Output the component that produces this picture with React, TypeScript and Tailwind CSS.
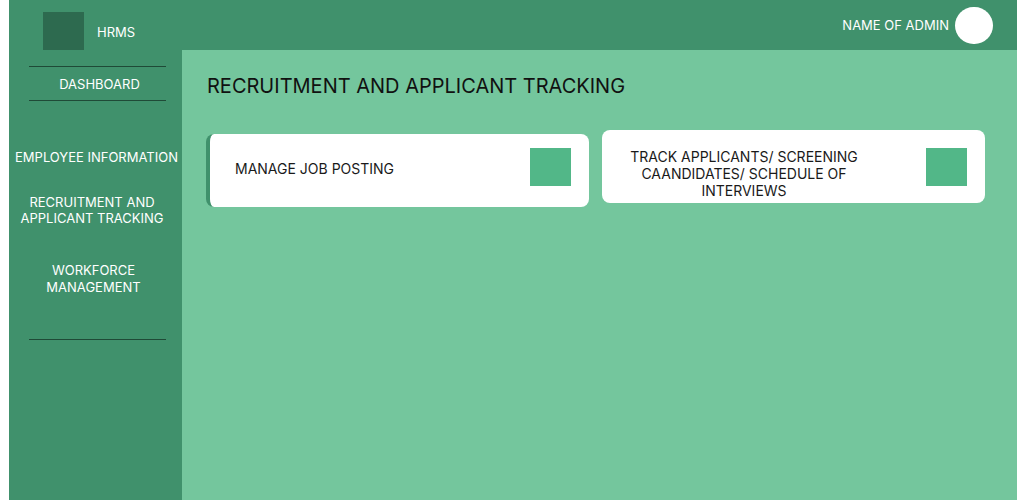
export default function App() {
  return (
    <div className="min-h-[500px] h-[500px] w-full bg-white pl-[9px] font-['Inter','Liberation_Sans',sans-serif] overflow-hidden">
      <div className="flex h-full flex-col">
        {/* Top bar */}
        <header className="flex h-[50px] items-stretch bg-[#40916c]">
          <div className="flex w-[173px] items-end">
            <div className="ml-[34px] h-[38px] w-[41px] bg-[#2d6a4f]" />
            <span className="mb-[8px] ml-[13px] text-[13px] text-white">HRMS</span>
          </div>
          <div className="ml-auto mr-[24px] flex items-center gap-[6px]">
            <span className="mt-[2px] text-[13px] text-white">NAME OF ADMIN</span>
            <div className="h-[37px] w-[38px] rounded-full bg-white" />
          </div>
        </header>

        <div className="flex flex-1">
          {/* Sidebar */}
          <aside className="flex w-[173px] flex-col items-center bg-[#40916c] text-[13px] leading-[16px] text-white">
            <div className="ml-[4px] mt-[16px] h-px w-[137px] bg-[#1f4a37]" />
            <div className="flex h-[33px] items-center pl-[8px]">DASHBOARD</div>
            <div className="ml-[4px] h-px w-[137px] bg-[#1f4a37]" />
            <div className="mt-[48px] pl-[2px] text-center">EMPLOYEE INFORMATION</div>
            <div className="mt-[29px] pr-[7px] text-center">
              RECRUITMENT AND
              <br />
              APPLICANT TRACKING
            </div>
            <div className="mt-[36px] pr-[4px] text-center leading-[17px]">
              WORKFORCE
              <br />
              MANAGEMENT
            </div>
            <div className="ml-[4px] mt-[43px] h-px w-[137px] bg-[#1f4a37]" />
          </aside>

          {/* Main */}
          <main className="flex-1 bg-[#74c69d] pl-[25px]">
            <h1 className="mt-[23px] text-[20px] leading-[26px] text-[#111]">
              RECRUITMENT AND APPLICANT TRACKING
            </h1>
            <div className="-ml-px mt-[31px] flex items-start gap-[13px]">
              <div className="mt-[4px] flex h-[73px] w-[383px] items-start rounded-[8px] border-l-[4px] border-[#40916c] bg-white pl-[25px] pr-[18px]">
                <span className="mt-[26px] text-[14px] leading-[17px] text-[#1a1a1a]">MANAGE JOB POSTING</span>
                <div className="ml-auto mt-[14px] h-[38px] w-[41px] bg-[#52b788]" />
              </div>
              <div className="flex h-[73px] w-[383px] items-start rounded-[8px] bg-white pr-[18px]">
                <span className="mt-[18px] w-[284px] text-center text-[14px] leading-[17px] text-[#1a1a1a]">
                  TRACK APPLICANTS/ SCREENING
                  <br />
                  CAANDIDATES/ SCHEDULE OF
                  <br />
                  INTERVIEWS
                </span>
                <div className="ml-auto mt-[18px] h-[38px] w-[41px] bg-[#52b788]" />
              </div>
            </div>
          </main>
        </div>
      </div>
    </div>
  );
}
